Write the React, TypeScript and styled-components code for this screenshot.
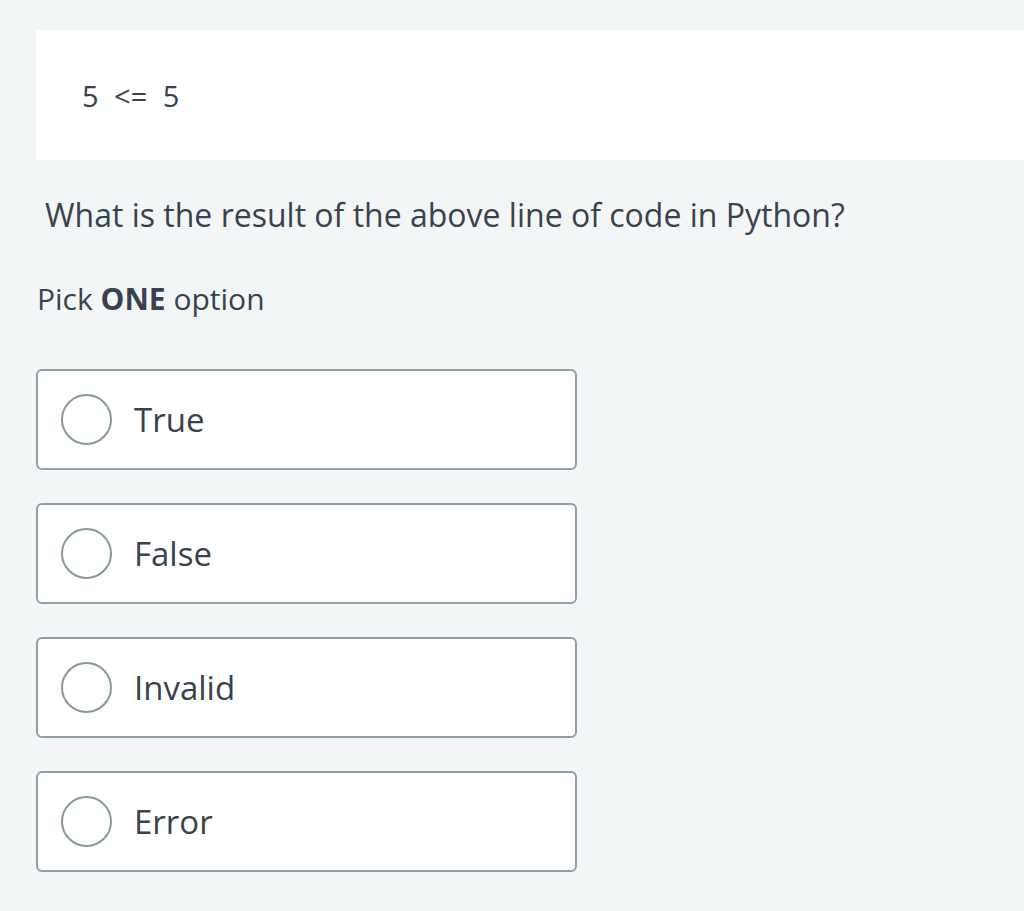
import React from 'react';
import styled, { createGlobalStyle } from 'styled-components';

const GlobalStyle = createGlobalStyle`
  html, body {
    margin: 0;
    padding: 0;
    background: #f3f6f7;
  }
  body {
    font-family: 'Open Sans', 'Liberation Sans', sans-serif;
    color: #39424e;
  }
`;

const Page = styled.div`
  display: flex;
  flex-direction: column;
  padding: 30px 0 40px 36px;
  overflow: hidden;
`;

const CodeBlock = styled.pre`
  margin: 0;
  width: 1000px;
  height: 130px;
  box-sizing: border-box;
  padding: 0 0 0 46px;
  display: flex;
  align-items: center;
  background: #ffffff;
  font-family: 'Open Sans', sans-serif;
  font-size: 29px;
  word-spacing: 8px;
  color: #39424e;
`;

const Question = styled.p`
  margin: 30px 0 0 9px;
  font-size: 32px;
  line-height: 50px;
`;

const Hint = styled.p`
  margin: 39px 0 0 1px;
  font-size: 30px;
  line-height: 40px;

  strong {
    font-weight: 700;
  }
`;

const Options = styled.div`
  display: flex;
  flex-direction: column;
  gap: 33px;
  margin-top: 50px;
`;

const Option = styled.label`
  width: 541px;
  height: 101px;
  box-sizing: border-box;
  display: flex;
  align-items: center;
  gap: 22px;
  padding-left: 23px;
  background: #ffffff;
  border: 2px solid #8ea0a5;
  border-radius: 6px;
  cursor: pointer;
`;

const Radio = styled.span`
  width: 51px;
  height: 51px;
  box-sizing: border-box;
  border: 2px solid #88999d;
  border-radius: 50%;
  flex-shrink: 0;
`;

const OptionText = styled.span`
  font-size: 33px;
  color: #39424e;
`;

const choices = ['True', 'False', 'Invalid', 'Error'];

const App: React.FC = () => {
  return (
    <>
      <GlobalStyle />
      <Page>
        <CodeBlock>5 &lt;= 5</CodeBlock>
        <Question>What is the result of the above line of code in Python?</Question>
        <Hint>
          Pick <strong>ONE</strong> option
        </Hint>
        <Options>
          {choices.map((choice) => (
            <Option key={choice}>
              <Radio />
              <OptionText>{choice}</OptionText>
            </Option>
          ))}
        </Options>
      </Page>
    </>
  );
};

export default App;
